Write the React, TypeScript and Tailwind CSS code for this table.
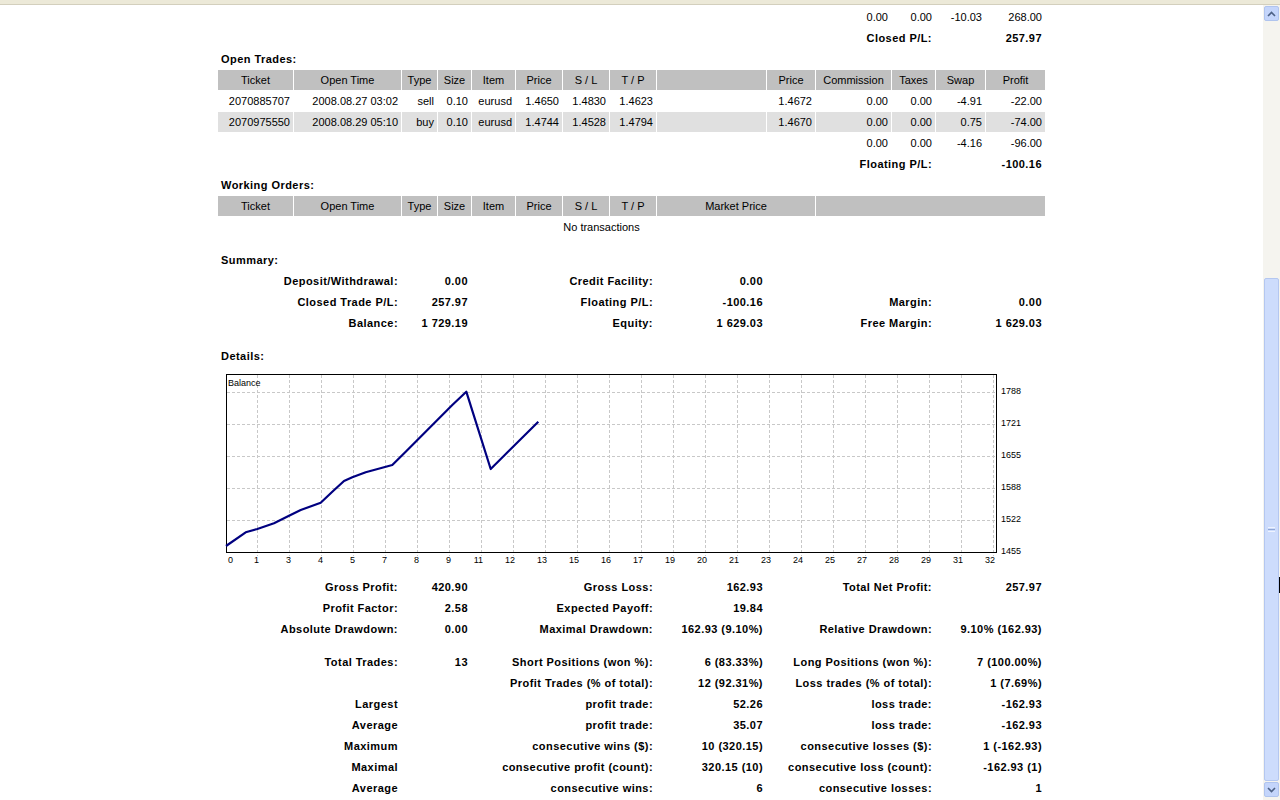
import React from 'react';

const cell = 'h-[20px] flex items-center px-[3px] whitespace-nowrap';
const right = `${cell} justify-end`;
const rightBold = `${cell} justify-end font-bold tracking-[0.45px]`;
const head = `${cell} justify-center bg-[#c0c0c0]`;

const openTrades = [
  ['2070885707', '2008.08.27 03:02', 'sell', '0.10', 'eurusd', '1.4650', '1.4830', '1.4623', '', '1.4672', '0.00', '0.00', '-4.91', '-22.00'],
  ['2070975550', '2008.08.29 05:10', 'buy', '0.10', 'eurusd', '1.4744', '1.4528', '1.4794', '', '1.4670', '0.00', '0.00', '0.75', '-74.00'],
];

const tradeHeads = ['Ticket', 'Open Time', 'Type', 'Size', 'Item', 'Price', 'S / L', 'T / P'];

// label / value pairs laid out over columns 1-2 | 3-4 | 5-8 | 9 | 10-12 | 13-14
type Triple = [string, string, string, string, string, string];

const summary: Triple[] = [
  ['Deposit/Withdrawal:', '0.00', 'Credit Facility:', '0.00', '', ''],
  ['Closed Trade P/L:', '257.97', 'Floating P/L:', '-100.16', 'Margin:', '0.00'],
  ['Balance:', '1 729.19', 'Equity:', '1 629.03', 'Free Margin:', '1 629.03'],
];

const stats1: Triple[] = [
  ['Gross Profit:', '420.90', 'Gross Loss:', '162.93', 'Total Net Profit:', '257.97'],
  ['Profit Factor:', '2.58', 'Expected Payoff:', '19.84', '', ''],
  ['Absolute Drawdown:', '0.00', 'Maximal Drawdown:', '162.93 (9.10%)', 'Relative Drawdown:', '9.10% (162.93)'],
];

const stats2: Triple[] = [
  ['Total Trades:', '13', 'Short Positions (won %):', '6 (83.33%)', 'Long Positions (won %):', '7 (100.00%)'],
  ['', '', 'Profit Trades (% of total):', '12 (92.31%)', 'Loss trades (% of total):', '1 (7.69%)'],
  ['Largest', '', 'profit trade:', '52.26', 'loss trade:', '-162.93'],
  ['Average', '', 'profit trade:', '35.07', 'loss trade:', '-162.93'],
  ['Maximum', '', 'consecutive wins ($):', '10 (320.15)', 'consecutive losses ($):', '1 (-162.93)'],
  ['Maximal', '', 'consecutive profit (count):', '320.15 (10)', 'consecutive loss (count):', '-162.93 (1)'],
  ['Average', '', 'consecutive wins:', '6', 'consecutive losses:', '1'],
];

function TripleRow({ row }: { row: Triple }) {
  return (
    <>
      <div className={`${rightBold} col-span-2`}>{row[0]}</div>
      <div className={`${rightBold} col-span-2`}>{row[1]}</div>
      <div className={`${rightBold} col-span-4`}>{row[2]}</div>
      <div className={rightBold}>{row[3]}</div>
      <div className={`${rightBold} col-span-3`}>{row[4]}</div>
      <div className={`${rightBold} col-span-2`}>{row[5]}</div>
    </>
  );
}

function Heading({ children }: { children: React.ReactNode }) {
  return <div className={`${cell} col-span-14 font-bold tracking-[0.45px]`}>{children}</div>;
}

const Spacer = () => <div className="col-span-14 h-[11px]" />;

const balance: [number, number][] = [
  [8, 179], [27.7, 165.3], [39.3, 162], [56, 156.3], [71, 148.7], [82.7, 143],
  [102.7, 135.7], [114.3, 124.7], [126, 114], [134.3, 110.3], [147.7, 105.3],
  [174.3, 98], [187.7, 84.7], [234.3, 38], [248.3, 24.7], [272.7, 102], [320.3, 54.7],
];

const xLabels = ['1', '3', '4', '5', '7', '8', '9', '11', '12', '13', '15', '16', '17', '19', '20', '21', '23', '24', '25', '27', '28', '29', '31', '32'];
const yLabels = ['1788', '1721', '1655', '1588', '1522', '1455'];

function BalanceChart() {
  return (
    <svg width="827" height="209" className="block" style={{ fontFamily: '"Liberation Sans", Arial, sans-serif' }}>
      {[25, 57, 89, 121, 153].map((y) => (
        <line key={y} x1="9" x2="778" y1={y + 0.5} y2={y + 0.5} stroke="#c8c8c8" strokeDasharray="3 2" />
      ))}
      {xLabels.map((_, k) => (
        <line key={k} x1={39.5 + 32 * k} x2={39.5 + 32 * k} y1="8" y2="189" stroke="#c8c8c8" strokeDasharray="3 2" />
      ))}
      <rect x="8.5" y="7.5" width="770" height="178" fill="none" stroke="#000" />
      <polyline
        points={balance.map(([x, y]) => `${x},${y}`).join(' ')}
        fill="none"
        stroke="#000080"
        strokeWidth="2.2"
        strokeLinejoin="round"
      />
      <text x="10" y="18.5" fontSize="9" fill="#000">Balance</text>
      <text x="10" y="196" fontSize="9" fill="#000">0</text>
      {xLabels.map((t, k) => (
        <text key={t} x={41 + 32 * k} y="196" fontSize="9" textAnchor="end" fill="#000">{t}</text>
      ))}
      {yLabels.map((t, i) => (
        <text key={t} x="783" y={26.5 + 32 * i} fontSize="9" fill="#000">{t}</text>
      ))}
    </svg>
  );
}

function Chevron({ up }: { up?: boolean }) {
  return (
    <svg width="9" height="6" viewBox="0 0 9 6">
      <path d={up ? 'M1 5 L4.5 1.5 L8 5' : 'M1 1 L4.5 4.5 L8 1'} fill="none" stroke="#4d6185" strokeWidth="1.6" />
    </svg>
  );
}

function Scrollbar() {
  return (
    <div className="relative w-[17px] flex flex-col bg-[#f5f4ef] pt-[1px]">
      <div className="h-[15px] mx-[1px] rounded-[2px] border border-[#b0c4ee] bg-[#c4d5fb] flex items-center justify-center">
        <Chevron up />
      </div>
      <div className="h-[257px]" />
      <div className="h-[503px] mx-[1px] rounded-[2px] border border-[#b4c7f0] bg-[#cddcfc] flex items-center justify-center">
        <div className="flex flex-col gap-[1px]">
          <div className="w-[7px] h-[1px] bg-[#eef3ff]" />
          <div className="w-[7px] h-[1px] bg-[#8fa6d6]" />
          <div className="w-[7px] h-[1px] bg-[#eef3ff]" />
        </div>
      </div>
      <div className="h-[15px] mt-[1px] mx-[1px] rounded-[2px] border border-[#b0c4ee] bg-[#c4d5fb] flex items-center justify-center">
        <Chevron />
      </div>
      <div className="absolute right-0 top-[572px] w-[1px] h-[16px] bg-black" />
    </div>
  );
}

export default function App() {
  return (
    <div className="h-[800px] w-full flex flex-col overflow-hidden bg-white text-[11px] text-black" style={{ fontFamily: '"Liberation Sans", Arial, sans-serif' }}>
      <div className="h-[5px] bg-[#ece9d8] border-b border-[#d3cfbd]" />
      <div className="flex flex-1 min-h-0">
        <div className="flex-1 overflow-hidden pt-[2px]">
          <div className="w-[827px] mx-auto grid grid-cols-[75px_107px_35px_33px_43px_46px_46px_46px_109px_48px_75px_43px_49px_59px] gap-[1px]">
            {/* closed trades totals (tail end) */}
            <div className="col-span-10 h-[20px]" />
            <div className={right}>0.00</div>
            <div className={right}>0.00</div>
            <div className={right}>-10.03</div>
            <div className={right}>268.00</div>
            <div className="col-span-10 h-[20px]" />
            <div className={`${rightBold} col-span-2`}>Closed P/L:</div>
            <div className={`${rightBold} col-span-2`}>257.97</div>

            <Heading>Open Trades:</Heading>
            {tradeHeads.map((h) => (
              <div key={h} className={head}>{h}</div>
            ))}
            <div className={head} />
            <div className={head}>Price</div>
            <div className={head}>Commission</div>
            <div className={head}>Taxes</div>
            <div className={head}>Swap</div>
            <div className={head}>Profit</div>
            {openTrades.map((row, i) =>
              row.map((v, j) => (
                <div key={`${i}-${j}`} className={i % 2 ? `${right} bg-[#e0e0e0]` : right}>{v}</div>
              ))
            )}
            <div className="col-span-10 h-[20px]" />
            <div className={right}>0.00</div>
            <div className={right}>0.00</div>
            <div className={right}>-4.16</div>
            <div className={right}>-96.00</div>
            <div className="col-span-10 h-[20px]" />
            <div className={`${rightBold} col-span-2`}>Floating P/L:</div>
            <div className={`${rightBold} col-span-2`}>-100.16</div>

            <Heading>Working Orders:</Heading>
            {tradeHeads.map((h) => (
              <div key={h} className={head}>{h}</div>
            ))}
            <div className={`${head} col-span-2`}>Market Price</div>
            <div className={`${head} col-span-4`} />
            <div className={`${cell} col-span-13 justify-center`}>No transactions</div>
            <div className="h-[20px]" />
            <Spacer />

            <Heading>Summary:</Heading>
            {summary.map((r, i) => (
              <TripleRow key={i} row={r} />
            ))}
            <Spacer />

            <Heading>Details:</Heading>
            <div className="col-span-14 h-[209px]">
              <BalanceChart />
            </div>
            {stats1.map((r, i) => (
              <TripleRow key={i} row={r} />
            ))}
            <Spacer />
            {stats2.map((r, i) => (
              <TripleRow key={i} row={r} />
            ))}
          </div>
        </div>
        <Scrollbar />
      </div>
    </div>
  );
}
